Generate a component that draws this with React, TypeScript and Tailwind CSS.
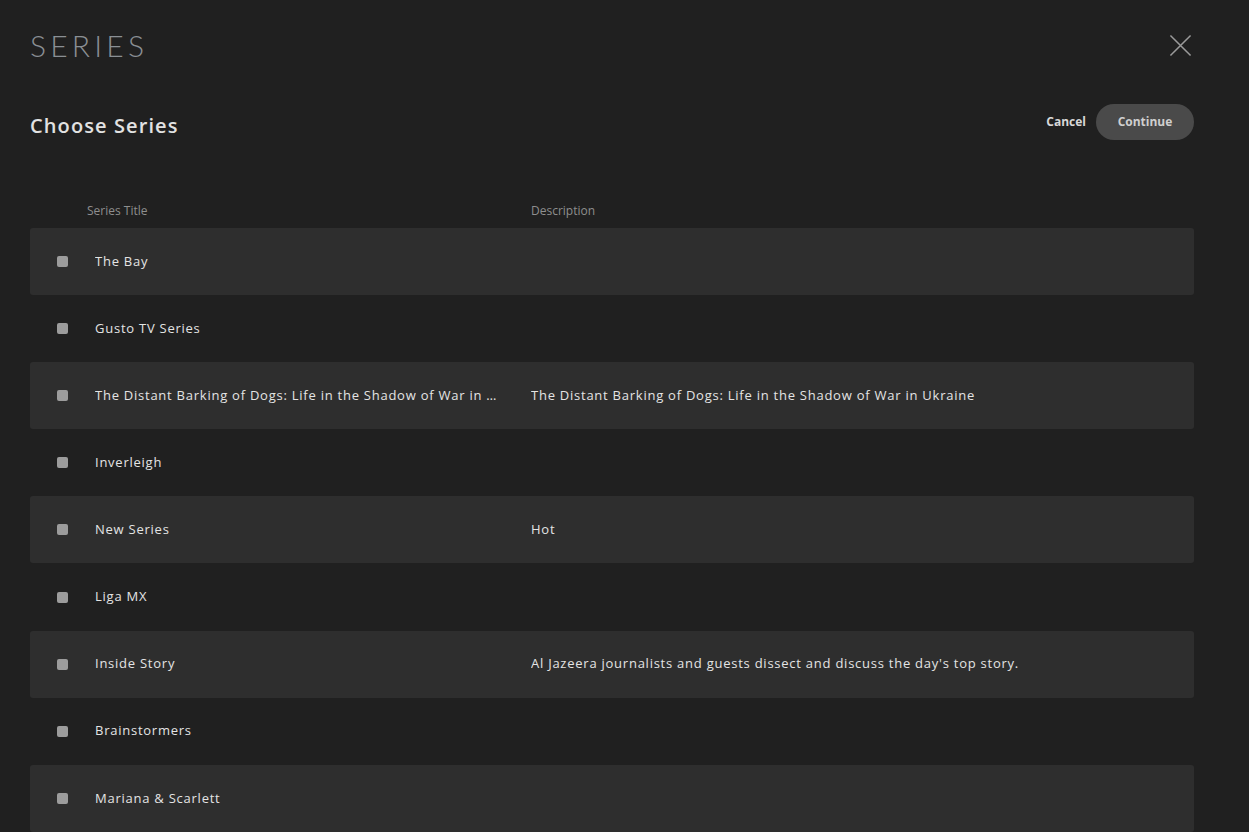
import React from "react";

const rows: { title: string; desc: string }[] = [
  { title: "The Bay", desc: "" },
  { title: "Gusto TV Series", desc: "" },
  {
    title: "The Distant Barking of Dogs: Life in the Shadow of War in Ukraine",
    desc: "The Distant Barking of Dogs: Life in the Shadow of War in Ukraine",
  },
  { title: "Inverleigh", desc: "" },
  { title: "New Series", desc: "Hot" },
  { title: "Liga MX", desc: "" },
  {
    title: "Inside Story",
    desc: "Al Jazeera journalists and guests dissect and discuss the day's top story.",
  },
  { title: "Brainstormers", desc: "" },
  { title: "Mariana & Scarlett", desc: "" },
];

export default function App() {
  return (
    <div
      className="w-full h-[832px] overflow-hidden bg-[#202020] px-[30px]"
      style={{ fontFamily: '"Open Sans", "Liberation Sans", sans-serif' }}
    >
      <div className="w-[1164px]">
        <div className="flex items-center justify-between h-[90px] pr-[2px]">
          <div
            className="text-[30px] font-light tracking-[0.14em] text-[#8a8f94] leading-none"
            style={{ fontFamily: 'Lato, "Open Sans", sans-serif' }}
          >
            SERIES
          </div>
          <svg width="23" height="23" viewBox="0 0 24 24" className="text-[#9a9a9a]">
            <path d="M1.5 1.5 L22.5 22.5 M22.5 1.5 L1.5 22.5" stroke="currentColor" strokeWidth="1.6" fill="none" />
          </svg>
        </div>
        <div className="flex items-center justify-between h-[72px]">
          <div className="text-[20px] font-semibold text-[#e2e2e2] tracking-[0.055em]">Choose Series</div>
          <div className="flex items-center mb-[8px]">
            <button className="text-[12px] font-bold text-[#d8d8d8] mr-[10px]">Cancel</button>
            <button className="h-[36px] w-[98px] rounded-full bg-[#4a4a4a] text-[12px] font-bold text-[#cfcfcf]">
              Continue
            </button>
          </div>
        </div>
        <div className="flex items-end h-[66px] pb-[8px] text-[12px] text-[#8e8e8e]">
          <div className="w-[501px] pl-[57px]">Series Title</div>
          <div>Description</div>
        </div>
        {rows.map((r, i) => (
          <div
            key={i}
            className={`flex items-center h-[67.1px] rounded-[3px] text-[13px] tracking-[0.058em] text-[#e4e4e4] ${
              i % 2 === 0 ? "bg-[#2e2e2e]" : "bg-[#202020]"
            }`}
          >
            <div className="w-[65px] pl-[27px] flex items-center">
              <div className="w-[11px] h-[11px] rounded-[2px] bg-[#9c9c9c]" />
            </div>
            <div className="w-[436px] pr-[30px] truncate">{r.title}</div>
            <div className="flex-1 truncate">{r.desc}</div>
          </div>
        ))}
      </div>
    </div>
  );
}
